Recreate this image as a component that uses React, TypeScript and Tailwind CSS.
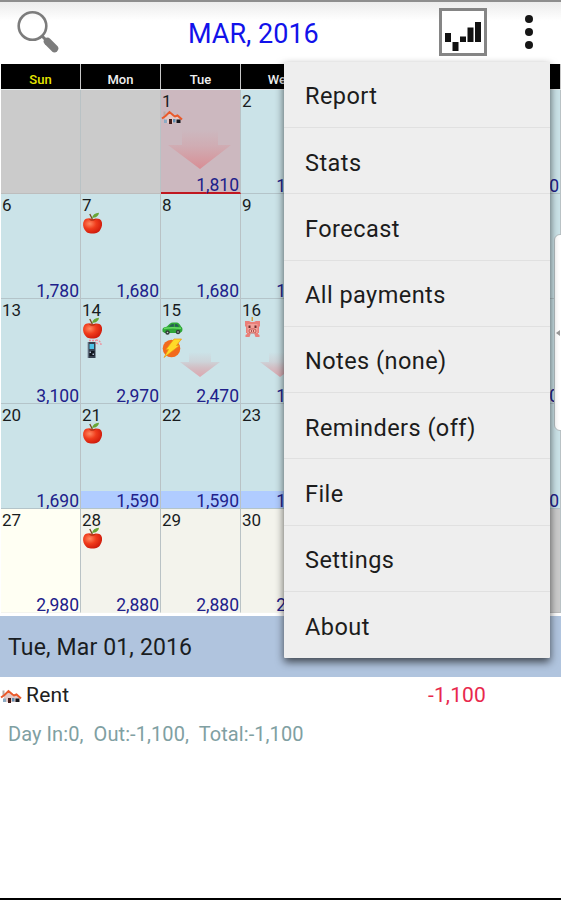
import { clsx } from 'clsx';

type IconName = 'house' | 'apple' | 'phone' | 'car' | 'power' | 'pig';

interface Day {
  day?: number;
  balance?: string;
  icons?: IconName[];
  arrow?: 'large' | 'small';
  tone: 'past' | 'none' | 'selected' | 'today' | 'future';
  low?: boolean;
}

const weekdays = ['Sun', 'Mon', 'Tue', 'Wed', '', '', ''];

const menuItems = [
  'Report',
  'Stats',
  'Forecast',
  'All payments',
  'Notes (none)',
  'Reminders (off)',
  'File',
  'Settings',
  'About',
];

const weeks: Day[][] = [
  [
    { tone: 'none' },
    { tone: 'none' },
    { day: 1, balance: '1,810', icons: ['house'], arrow: 'large', tone: 'selected' },
    { day: 2, balance: '1,810', tone: 'past' },
    { tone: 'past' },
    { tone: 'past' },
    { balance: '1,780', tone: 'past' },
  ],
  [
    { day: 6, balance: '1,780', tone: 'past' },
    { day: 7, balance: '1,680', icons: ['apple'], tone: 'past' },
    { day: 8, balance: '1,680', tone: 'past' },
    { day: 9, balance: '1,680', tone: 'past' },
    { tone: 'past' },
    { tone: 'past' },
    { tone: 'past' },
  ],
  [
    { day: 13, balance: '3,100', tone: 'past' },
    { day: 14, balance: '2,970', icons: ['apple', 'phone'], tone: 'past' },
    { day: 15, balance: '2,470', icons: ['car', 'power'], arrow: 'small', tone: 'past' },
    { day: 16, balance: '1,690', icons: ['pig'], arrow: 'small', tone: 'past' },
    { tone: 'past' },
    { tone: 'past' },
    { balance: '1,690', tone: 'past' },
  ],
  [
    { day: 20, balance: '1,690', tone: 'past' },
    { day: 21, balance: '1,590', icons: ['apple'], tone: 'past', low: true },
    { day: 22, balance: '1,590', tone: 'past', low: true },
    { day: 23, balance: '1,590', tone: 'past', low: true },
    { tone: 'past' },
    { tone: 'past' },
    { balance: '2,980', tone: 'past' },
  ],
  [
    { day: 27, balance: '2,980', tone: 'today' },
    { day: 28, balance: '2,880', icons: ['apple'], tone: 'future' },
    { day: 29, balance: '2,880', tone: 'future' },
    { day: 30, balance: '2,880', tone: 'future' },
    { tone: 'future' },
    { tone: 'none' },
    { tone: 'none' },
  ],
];

const tones = {
  past: 'bg-[#cbe3e8] border-b-[#b4c4c9]',
  none: 'bg-[#cbcbcb] border-b-[#bdbdbd]',
  selected: 'bg-[#ccb8bf] border-b-[#c01820]',
  today: 'bg-[#fffff3] border-b-[#f4f4ee]',
  future: 'bg-[#f3f3ec] border-b-[#f4f4ee]',
};

function HouseIcon() {
  return (
    <svg viewBox="0 0 22 16" className="h-4 w-[22px]">
      <path d="M4 8 9 4l4 4 3-1 3 3v4H4z" fill="#e3c9c6" />
      <path d="M2.500 2.500h2v5h-2z" fill="#b9aaa5" />
      <path d="M1 9.500 4.500 7 8.500 3l4 3.500 1.500 1 2.500-1L21 10.500" fill="none" stroke="#ea5a2b" strokeWidth="2" />
      <path d="M3 10.500h3V14H3z" fill="#8cabc4" />
      <path d="M8 10h3v5H8z" fill="#461c18" />
      <path d="M12 10h2.500v3.500H12z" fill="#5f8fb4" />
      <path d="M15.500 10.500h4v3.500h-4z" fill="#15151b" />
    </svg>
  );
}

function AppleIcon() {
  return (
    <svg viewBox="0 0 22 22" className="-mt-px h-[22px] w-[22px]">
      <defs>
        <radialGradient id="apple" cx="0.35" cy="0.35" r="0.75">
          <stop offset="0" stopColor="#ff8a62" />
          <stop offset="0.45" stopColor="#f03c1c" />
          <stop offset="1" stopColor="#c81408" />
        </radialGradient>
      </defs>
      <path
        d="M12 7c4-1.200 7-.5 8.300 1.800 1.400 2.600.9 6.200-1 9-1.500 2.500-3.300 3.700-7.800 3.700S5.500 20.500 3.800 18C1.800 15 1.500 11 3 8.700 4.500 6.300 8 5.800 12 7z"
        fill="url(#apple)"
      />
      <path d="M8.500 7.500c2 1 4 1 6-.3" fill="none" stroke="#a92a10" strokeWidth="1" />
      <path d="M11.500 7.500 8.800 2" stroke="#7a4a20" strokeWidth="1.300" />
      <path d="M11 6C11.500 3 14 1 18 .8 17.500 4 15 6 11 6z" fill="#68a636" />
    </svg>
  );
}

function PhoneIcon() {
  return (
    <svg viewBox="0 0 22 20" className="h-5 w-[22px]">
      <path d="M7 3h7.500v16H7z" fill="#36404e" />
      <path d="M8.500 5h4.500v5H8.500z" fill="#4cc3e6" />
      <path d="M8.500 12h5v5h-5z" fill="#11161e" />
      <path d="M8.500 12.500H10V14H8.500zM11.500 14.500H13V16h-1.500z" fill="#aebdd0" />
      <path d="M7 3v16" stroke="#8696a8" />
      <path
        d="M8 1.500h7M15 1c3 0 5 2 5 5M15 4c1.500 0 2 .6 2 2"
        fill="none"
        stroke="#f08a98"
        strokeWidth="1.300"
        strokeDasharray="2 1"
      />
    </svg>
  );
}

function CarIcon() {
  return (
    <svg viewBox="0 0 22 20" className="h-5 w-[22px]">
      <path
        d="M1.500 11c.5-1.600 3-2 4.500-2.500C8 6.500 9.500 4.500 12 4.500h3.500c2 0 3.500 2 4.500 4 1.800.8 1.800 3.500 1 5L19 15H3.500L1.500 13.500z"
        fill="#2fa638"
      />
      <path d="M8 8.700c1.200-1.500 2.300-2.700 4-2.700h.8v2.700zM14 6h1.600c1.100.3 1.900 1.500 2.400 2.700h-4z" fill="#285d55" />
      <path d="M3 10.500c5-1 11-1 17-.3" fill="none" stroke="#66dc62" strokeWidth="1.500" />
      <circle cx="6.500" cy="14.500" r="2.200" fill="#303b36" />
      <circle cx="17" cy="14" r="2.200" fill="#303b36" />
      <circle cx="6.500" cy="14.500" r=".8" fill="#c5d0cb" />
      <circle cx="17" cy="14" r=".8" fill="#c5d0cb" />
    </svg>
  );
}

function PowerIcon() {
  return (
    <svg viewBox="0 0 22 20" className="h-5 w-[22px]">
      <circle cx="10.500" cy="10.500" r="8.800" fill="#f26a1c" />
      <path d="M13 1h7.500l-5 6.500h3L3 19.500l4.500-8H5z" fill="#ffda28" stroke="#e99612" strokeWidth=".7" />
    </svg>
  );
}

function PigIcon() {
  return (
    <svg viewBox="0 0 22 22" className="-mt-px h-[22px] w-[22px]">
      <path d="M10.500 0h1.500v4h-1.500z" fill="#d9a640" />
      <path d="M4 4h4l2 1h3l2-1h4v5l-1 1v6H5v-6L4 9zM6 15h3.500v2.500l-1 2.500H4.500v-2L6 17zM13.500 15H17v2l1.500 1v2h-4l-1-2.500z" fill="#ea7f79" />
      <path d="M6.500 7h10v9h-10z" fill="#f3a098" />
      <path d="M7.500 8.500h2V11h-2zM13.500 8.500h2V11h-2z" fill="#6d2b29" />
      <rect x="8" y="12" width="7" height="4" rx="2" fill="#f7b3aa" stroke="#b94743" strokeWidth=".8" />
      <path d="M10.500 13.300v1.400M12.500 13.300v1.400" stroke="#842c2a" />
    </svg>
  );
}

const icons = {
  house: HouseIcon,
  apple: AppleIcon,
  phone: PhoneIcon,
  car: CarIcon,
  power: PowerIcon,
  pig: PigIcon,
};

// Faded arrow behind the balance, its size follows the amount spent
function SpendArrow({ size }: { size: 'large' | 'small' }) {
  return (
    <svg viewBox="0 0 80 104" className="absolute inset-0 h-[104px] w-20">
      <defs>
        <linearGradient id={size} x1="0" y1="0" x2="0" y2="1">
          <stop offset="0" stopColor="#d89298" stopOpacity="0" />
          <stop offset="0.4" stopColor="#d89298" stopOpacity={size === 'large' ? '0.3' : '0.2'} />
          <stop offset="1" stopColor={size === 'large' ? '#d88d94' : '#dcaab2'} />
        </linearGradient>
      </defs>
      {size === 'large' ? (
        <path d="M21 40h36v15h13L39 79 7 55h14z" fill="url(#large)" />
      ) : (
        <path d="M28 53h22v10h9L39 78 19 63h9z" fill="url(#small)" />
      )}
    </svg>
  );
}

function DayCell({ day, balance, icons: names = [], arrow, tone, low }: Day) {
  return (
    <div
      className={clsx(
        'relative flex flex-col justify-between border-r border-r-[#b9c2c5] text-[17.5px] leading-5',
        tone === 'selected' ? 'border-b-2' : 'border-b',
        tones[tone]
      )}
    >
      {arrow && <SpendArrow size={arrow} />}
      <div className="flex flex-col items-start">
        <span className="h-[19px] pl-px text-[17px] leading-[23px] text-[#181c1e]">{day}</span>
        {names.map((name) => {
          const Icon = icons[name];
          return <Icon key={name} />;
        })}
      </div>
      {balance && (
        <div
          className={clsx(
            'relative h-[17px] pr-px text-right text-[#20208a]',
            tone === 'selected' ? 'leading-[21px]' : 'leading-5',
            low && 'bg-[#b0ccff]'
          )}
        >
          {balance}
        </div>
      )}
    </div>
  );
}

function Header() {
  return (
    <header className="flex h-16 items-center border-t-2 border-[#8e8e8e] bg-linear-to-b from-[#ececec] to-white to-30%">
      <svg viewBox="0 0 48 48" className="-mt-1 ml-[14px] h-12 w-12 shrink-0">
        <circle cx="18.500" cy="19" r="13.800" fill="none" stroke="#7c7c7c" strokeWidth="2.600" />
        <path d="m28 29 5 5" stroke="#7c7c7c" strokeWidth="3" />
        <path d="m33.500 34.500 7 7" stroke="#7c7c7c" strokeWidth="7.500" strokeLinecap="round" />
      </svg>
      <h1 className="ml-[126px] w-[150px] whitespace-nowrap pt-[3px] text-[27px] text-[#1212ea]">MAR, 2016</h1>
      <svg viewBox="0 0 50 50" className="-mt-0.5 ml-[100px] h-[50px] w-[50px] shrink-0">
        <rect x="2.500" y="2.500" width="45" height="45" fill="#fff" stroke="#858585" strokeWidth="3" />
        <path d="M7 26h6v9H7zM14.500 35h6v9h-6zM22 29.500h6V35h-6zM29.500 20.500h6V35h-6zM37 15h6v20h-6z" fill="#111" />
      </svg>
      <svg viewBox="0 0 10 36" className="-mt-0.5 ml-9 h-9 w-[10px] shrink-0">
        <circle cx="5" cy="5" r="4" fill="#161616" />
        <circle cx="5" cy="18" r="4" fill="#161616" />
        <circle cx="5" cy="31" r="4" fill="#161616" />
      </svg>
    </header>
  );
}

export default function App() {
  return (
    <div className="relative flex h-[900px] w-[561px] flex-col overflow-hidden border-b-2 border-black bg-white font-[Roboto,sans-serif]">
      <Header />

      <div className="ml-px grid h-[26px] w-[560px] shrink-0 grid-cols-7 border-b border-[#e2e8e9]">
        {weekdays.map((name, i) => (
          <div
            key={i}
            className={clsx(
              'border-r border-[#c8c8c8] bg-black pt-[7px] text-center text-[13px] font-medium leading-[18px]',
              name === 'Sun' ? 'text-[#e8e800]' : 'text-[#f0f0f0]'
            )}
          >
            {name}
          </div>
        ))}
      </div>

      <div className="ml-px grid h-[523px] w-[560px] shrink-0 grid-cols-7 grid-rows-[104px_repeat(3,105px)_104px]">
        {weeks.flat().map((d, i) => (
          <DayCell key={i} {...d} />
        ))}
      </div>

      <div className="mt-[3px] flex h-[61px] shrink-0 items-center bg-[#b0c4de] pl-2 pt-[3px] text-[23px] tracking-[0.15px] text-[#1a1d22]">
        Tue, Mar 01, 2016
      </div>

      <div className="flex h-9 items-center pt-0.5 text-[21px] text-[#202020]">
        <HouseIcon />
        <span className="ml-1 tracking-[0.2px]">Rent</span>
        <span className="ml-auto mr-[75px] tracking-[0.15px] text-[#e8284c]">-1,100</span>
      </div>
      <p className="whitespace-pre pl-2 pt-[7px] text-[20px] leading-7 tracking-[0.08px] text-[#80a0a2]">
        Day In:0,  Out:-1,100,  Total:-1,100
      </p>

      {/* Edge panel handle */}
      <div className="absolute left-[554px] top-[234px] flex h-[197px] w-4 items-center rounded-l-md border border-[#b4bec1] bg-white">
        <svg viewBox="0 0 4 6" className="ml-px h-[6px] w-1">
          <path d="M4 0v6L0 3z" fill="#999" />
        </svg>
      </div>

      {/* Overflow menu */}
      <nav className="absolute left-[284px] top-[62px] grid h-[596px] w-[266px] grid-rows-9 divide-y divide-[#e0e0e0] rounded-[1px] bg-[#eee] shadow-[0_4px_8px_rgba(0,0,0,0.65)]">
        {menuItems.map((item) => (
          <a key={item} className="flex items-center pl-[21px] pt-[5px] text-[23.5px] tracking-[0.45px] text-[#1c1c1c]">
            {item}
          </a>
        ))}
      </nav>
    </div>
  );
}
